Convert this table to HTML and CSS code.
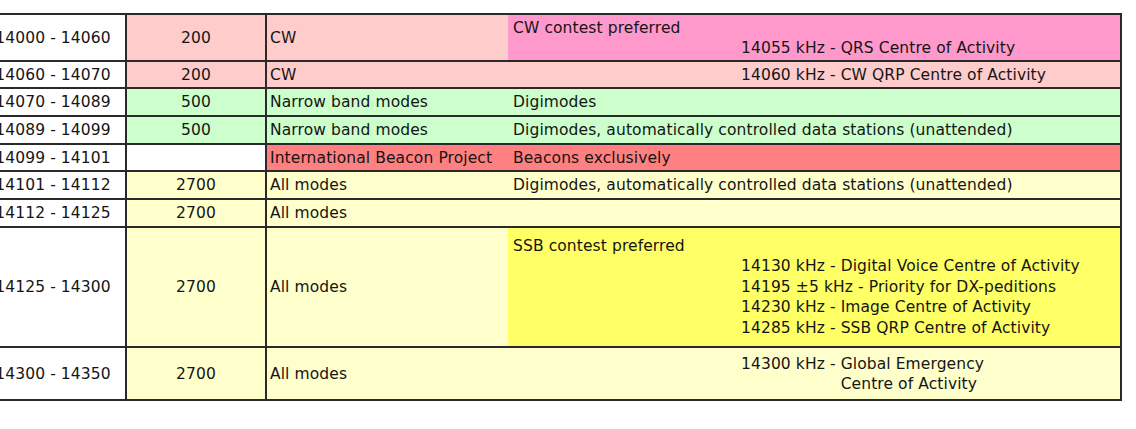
FILE: index.html
```html
<!DOCTYPE html>
<html>
<head>
<meta charset="utf-8">
<link rel="stylesheet" href="styles.css">
</head>
<body>
<table class="plan">
  <colgroup>
    <col class="w1"><col class="w2"><col class="w3"><col class="w4">
  </colgroup>
  <tr class="first">
    <td class="c1">14000 - 14060</td>
    <td class="c2 pink">200</td>
    <td class="c3 pink">CW</td>
    <td class="c4 hotpink">CW contest preferred<div class="ind">14055 kHz - QRS Centre of Activity</div></td>
  </tr>
  <tr class="second">
    <td class="c1">14060 - 14070</td>
    <td class="c2 pink">200</td>
    <td class="c3 pink">CW</td>
    <td class="c4 pink"><div class="ind">14060 kHz - CW QRP Centre of Activity</div></td>
  </tr>
  <tr>
    <td class="c1">14070 - 14089</td>
    <td class="c2 green">500</td>
    <td class="c3 green">Narrow band modes</td>
    <td class="c4 green">Digimodes</td>
  </tr>
  <tr>
    <td class="c1">14089 - 14099</td>
    <td class="c2 green">500</td>
    <td class="c3 green">Narrow band modes</td>
    <td class="c4 green">Digimodes, automatically controlled data stations (unattended)</td>
  </tr>
  <tr>
    <td class="c1">14099 - 14101</td>
    <td class="c2"></td>
    <td class="c3 red">International Beacon Project</td>
    <td class="c4 red">Beacons exclusively</td>
  </tr>
  <tr>
    <td class="c1">14101 - 14112</td>
    <td class="c2 ltyellow">2700</td>
    <td class="c3 ltyellow">All modes</td>
    <td class="c4 ltyellow">Digimodes, automatically controlled data stations (unattended)</td>
  </tr>
  <tr>
    <td class="c1">14112 - 14125</td>
    <td class="c2 ltyellow">2700</td>
    <td class="c3 ltyellow">All modes</td>
    <td class="c4 ltyellow"></td>
  </tr>
  <tr class="tall">
    <td class="c1">14125 - 14300</td>
    <td class="c2 ltyellow">2700</td>
    <td class="c3 ltyellow">All modes</td>
    <td class="c4 yellow">SSB contest preferred
      <div class="ind">14130 kHz - Digital Voice Centre of Activity</div>
      <div class="ind">14195 ±5 kHz - Priority for DX-peditions</div>
      <div class="ind">14230 kHz - Image Centre of Activity</div>
      <div class="ind">14285 kHz - SSB QRP Centre of Activity</div>
    </td>
  </tr>
  <tr class="mid">
    <td class="c1">14300 - 14350</td>
    <td class="c2 ltyellow">2700</td>
    <td class="c3 ltyellow">All modes</td>
    <td class="c4 ltyellow"><div class="ind">14300 kHz - <span class="wrap">Global Emergency<br>Centre of Activity</span></div></td>
  </tr>
</table>
</body>
</html>
```

FILE: styles.css
```css
html, body {
  margin: 0;
  padding: 0;
  background: #ffffff;
}

body {
  overflow: hidden;
  font-family: "DejaVu Sans", Verdana, sans-serif;
  font-size: 15.5px;
  line-height: 20.5px;
  letter-spacing: 0.1px;
  color: #151515;
}

.plan {
  border-collapse: collapse;
  table-layout: fixed;
  margin: 13px 0 0 -21px;
  width: 1141px;
}

.w1 { width: 146px; }
.w2 { width: 140px; }
.w3 { width: 242px; }
.w4 { width: 613px; }

.plan td {
  border-top: 2px solid #2a2a2a;
  border-bottom: 2px solid #2a2a2a;
  padding: 3px 4px 2.3px 4px;
  vertical-align: middle;
  white-space: nowrap;
  overflow: hidden;
}

.plan tr.first td {
  padding-top: 2.5px;
  padding-bottom: 1.5px;
}

.plan tr.second td {
  padding-top: 2.5px;
  padding-bottom: 2px;
}

.plan td.c1 {
  text-align: center;
  border-left: 2px solid #2a2a2a;
  border-right: 2px solid #2a2a2a;
  padding-left: 0;
  padding-right: 0;
}

.plan td.c2 {
  text-align: center;
  border-right: 2px solid #2a2a2a;
}

.plan td.c3 {
  padding-left: 3px;
}

.plan td.c4 {
  padding-left: 5px;
  border-right: 2px solid #2a2a2a;
}

.plan tr.tall td {
  padding-top: 8px;
  padding-bottom: 7.5px;
}

.plan tr.mid td {
  padding-top: 6px;
  padding-bottom: 4px;
}

.ind {
  padding-left: 228px;
}

.wrap {
  display: inline-block;
  vertical-align: top;
}

.pink { background: #ffcccc; }
.hotpink { background: #ff99cc; }
.green { background: #ccffcc; }
.red { background: #ff8080; }
.ltyellow { background: #ffffcc; }
.yellow { background: #ffff66; }
```
